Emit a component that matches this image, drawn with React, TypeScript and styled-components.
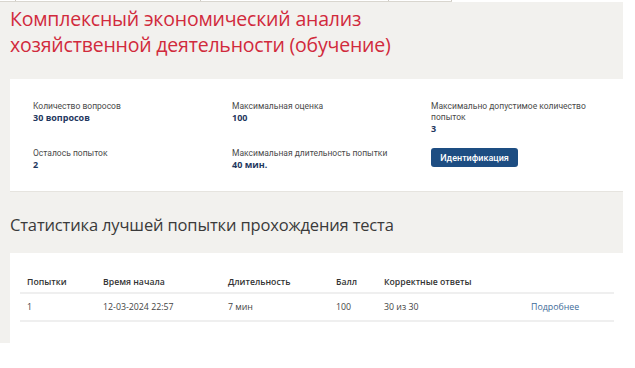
import React from "react";
import styled, { createGlobalStyle } from "styled-components";

const Global = createGlobalStyle`
  html, body { margin: 0; padding: 0; background: #ffffff; }
  body { font-family: "Open Sans", "Noto Sans", sans-serif; }
  * { box-sizing: border-box; }
`;

const TopRule = styled.div`
  display: flex;
  width: 452px;
  height: 2px;
  border-bottom: 1px solid #d9d6cf;
`;

const RuleCell = styled.div<{ $w: number }>`
  width: ${(p) => p.$w}px;
  height: 100%;
  border-right: 1px solid #cfcbc3;
`;

const Page = styled.div`
  width: 623px;
  background: #f2f1ee;
  padding: 4px 0 0 10px;
  display: flex;
  flex-direction: column;
`;

const Title = styled.h1`
  margin: 0;
  font-family: "Open Sans", sans-serif;
  font-size: 19.5px;
  line-height: 26px;
  font-weight: 500;
  color: #d12a3c;
  letter-spacing: -0.2px;
`;

const InfoCard = styled.section`
  margin-top: 21px;
  background: #ffffff;
  border-bottom: 1px solid #e6e4df;
  padding: 22px 0 0 23px;
  height: 113px;
  display: grid;
  grid-template-columns: 199px 199px 160px;
  grid-template-rows: 47px 40px;
`;

const Field = styled.div`
  display: flex;
  flex-direction: column;
  align-items: flex-start;
`;

const Label = styled.span`
  font-family: Roboto, "Open Sans", sans-serif;
  font-size: 8.5px;
  line-height: 11px;
  color: #4a4a4a;
`;

const Value = styled.span`
  font-size: 9px;
  line-height: 11px;
  font-weight: 700;
  color: #1f3860;
`;

const Button = styled.button`
  width: 87px;
  height: 19px;
  border: none;
  border-radius: 3px;
  background: #1d4d82;
  color: #ffffff;
  font-family: Roboto, "Open Sans", sans-serif;
  font-size: 9px;
  font-weight: 500;
  padding: 0;
  cursor: pointer;
`;

const Heading = styled.h2`
  margin: 21px 0 0 0;
  font-family: "Open Sans", sans-serif;
  font-size: 16.5px;
  line-height: 24px;
  font-weight: 400;
  color: #3a3a3a;
  letter-spacing: -0.15px;
`;

const TableCard = styled.section`
  margin-top: 16px;
  margin-bottom: -25px;
  background: #ffffff;
  padding: 18px 9px 46px 10px;
`;

const Table = styled.table`
  width: 100%;
  border-collapse: collapse;
  table-layout: fixed;
  font-family: "Open Sans", sans-serif;
`;

const Th = styled.th<{ $w?: number }>`
  ${(p) => (p.$w ? `width: ${p.$w}px;` : "")}
  text-align: left;
  font-size: 8.7px;
  font-weight: 600;
  color: #333333;
  height: 22px;
  padding: 0 0 0 7px;
  border-bottom: 2px solid #efefef;
`;

const Td = styled.td`
  font-size: 8.8px;
  color: #444444;
  height: 28px;
  padding: 0 0 0 7px;
  border-bottom: 2px solid #efefef;
`;

const Link = styled.a`
  color: #3e6b98;
  text-decoration: none;
`;

export default function App() {
  return (
    <>
      <Global />
      <TopRule>
        <RuleCell $w={16} />
        <RuleCell $w={185} />
        <RuleCell $w={188} />
        <RuleCell $w={63} />
      </TopRule>
      <Page>
        <Title>
          Комплексный экономический анализ
          <br />
          хозяйственной деятельности (обучение)
        </Title>
        <InfoCard>
          <Field>
            <Label>Количество вопросов</Label>
            <Value>30 вопросов</Value>
          </Field>
          <Field>
            <Label>Максимальная оценка</Label>
            <Value>100</Value>
          </Field>
          <Field>
            <Label>Максимально допустимое количество попыток</Label>
            <Value>3</Value>
          </Field>
          <Field>
            <Label>Осталось попыток</Label>
            <Value>2</Value>
          </Field>
          <Field>
            <Label>Максимальная длительность попытки</Label>
            <Value>40 мин.</Value>
          </Field>
          <Field>
            <Button>Идентификация</Button>
          </Field>
        </InfoCard>
        <Heading>Статистика лучшей попытки прохождения теста</Heading>
        <TableCard>
          <Table>
            <thead>
              <tr>
                <Th $w={76}>Попытки</Th>
                <Th $w={125}>Время начала</Th>
                <Th $w={108}>Длительность</Th>
                <Th $w={48}>Балл</Th>
                <Th $w={147}>Корректные ответы</Th>
                <Th />
              </tr>
            </thead>
            <tbody>
              <tr>
                <Td>1</Td>
                <Td>12-03-2024 22:57</Td>
                <Td>7 мин</Td>
                <Td>100</Td>
                <Td>30 из 30</Td>
                <Td>
                  <Link href="#">Подробнее</Link>
                </Td>
              </tr>
            </tbody>
          </Table>
        </TableCard>
      </Page>
    </>
  );
}
